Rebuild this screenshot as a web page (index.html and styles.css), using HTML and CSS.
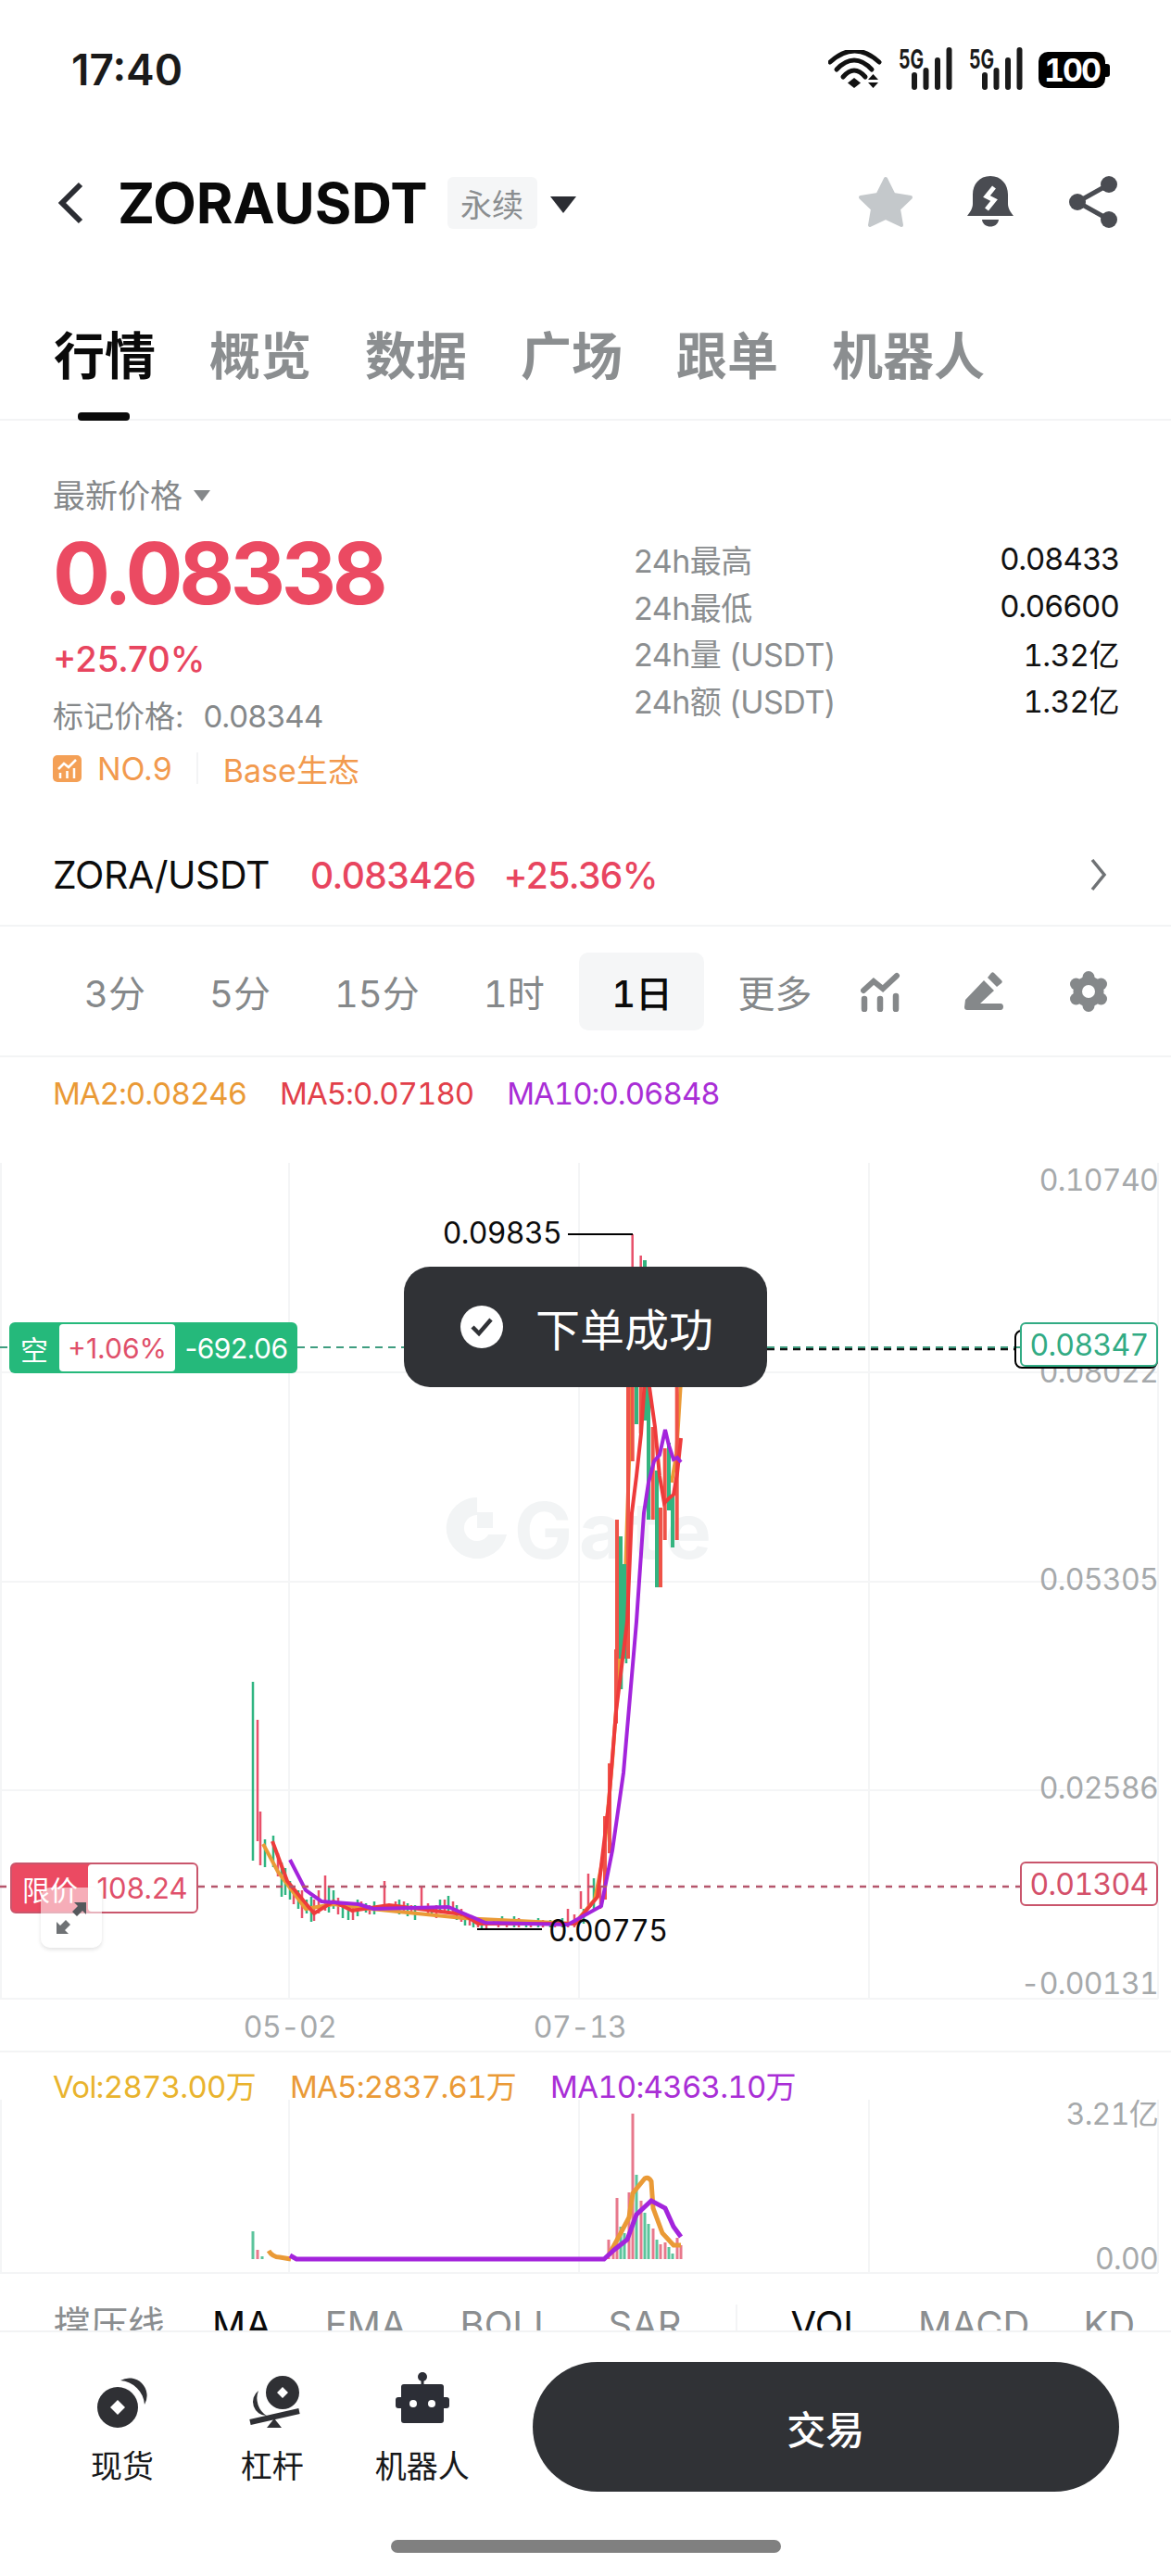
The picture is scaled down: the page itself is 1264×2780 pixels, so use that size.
FILE: index.html
```html
<!DOCTYPE HTML>
<html lang="zh">
<head>
<meta charset="utf-8">
<title>ZORAUSDT</title>
<link rel="stylesheet" href="styles.css">
</head>
<body>
<div class="page">

  <div class="status">
    <span class="time">17:40</span>
    <div class="status-icons">
      <svg class="wifi" width="58" height="42" viewBox="0 0 58 42">
        <g fill="none" stroke="#111" stroke-width="5" stroke-linecap="round">
          <path d="M2 13Q28.500 -11 55 13"/>
          <path d="M9 21Q28 1 47 21"/>
          <path d="M16 29Q28 15 40 29"/>
        </g>
        <path d="M28 30L35 35.500L28 41L21 35.500Z" fill="#111"/>
        <path d="M43 32L48.500 26L54 32ZM43 35L54 35L48.500 41Z" fill="#111"/>
      </svg>
      <svg class="signal" width="58" height="44" viewBox="0 0 58 44">
        <text class="signal-text" x="0" y="21" textLength="27" lengthAdjust="spacingAndGlyphs">5G</text>
        <path d="M17 28V41M29.500 23V41M42 12V41M54.500 1V41" stroke="#1a1a1a" stroke-width="6" stroke-linecap="round"/>
      </svg>
      <svg class="signal" width="58" height="44" viewBox="0 0 58 44">
        <text class="signal-text" x="0" y="21" textLength="27" lengthAdjust="spacingAndGlyphs">5G</text>
        <path d="M17 28V41M29.500 23V41M42 12V41M54.500 1V41" stroke="#1a1a1a" stroke-width="6" stroke-linecap="round"/>
      </svg>
      <div class="battery"><span class="battery-level">100</span></div>
    </div>
  </div>

  <div class="header">
    <svg class="back" width="30" height="46" viewBox="0 0 30 46"><path d="M26 3L6 23L26 43" fill="none" stroke="#2b2d33" stroke-width="6"/></svg>
    <span class="symbol">ZORAUSDT</span>
    <span class="badge">永续</span>
    <span class="caret"></span>
    <div class="header-icons">
      <svg class="star" width="60" height="56" viewBox="0 0 60 56"><path d="M30 3L38.500 20L57 23L44 35.500L47 53L30 45L13 53L16 35.500L3 23L21.500 20Z" fill="#c4c8cb" stroke="#c4c8cb" stroke-width="4" stroke-linejoin="round"/></svg>
      <svg width="50" height="56" viewBox="0 0 50 56">
        <path d="M25 0C13 0 6 9 6 20V30C6 35 3 39 0 43H50C47 39 44 35 44 30V20C44 9 37 0 25 0Z" fill="#4a4c52"/>
        <path d="M16 47H34C33 57 17 57 16 47Z" fill="#4a4c52"/>
        <path d="M29 12L21 22L29 26L21 36" fill="none" stroke="#fff" stroke-width="5"/>
      </svg>
      <svg width="52" height="56" viewBox="0 0 52 56">
        <g fill="#4a4c52"><circle cx="43" cy="9" r="9"/><circle cx="9" cy="28" r="9"/><circle cx="43" cy="47" r="9"/></g>
        <path d="M43 9L9 28L43 47" fill="none" stroke="#4a4c52" stroke-width="5"/>
      </svg>
    </div>
  </div>

  <div class="tabs">
    <div class="tab tab-active">行情</div>
    <div class="tab">概览</div>
    <div class="tab">数据</div>
    <div class="tab">广场</div>
    <div class="tab">跟单</div>
    <div class="tab">机器人</div>
  </div>

  <div class="quote">
    <div class="quote-left">
      <div class="last-label">最新价格<span class="caret-small"></span></div>
      <div class="last-price">0.08338</div>
      <div class="last-change">+25.70%</div>
      <div class="mark-price">标记价格:<span class="mark-value">0.08344</span></div>
      <div class="tags">
        <svg width="31" height="29" viewBox="0 0 31 29">
          <rect width="31" height="29" rx="5" fill="#f4a056"/>
          <path d="M8 25V19M15.500 25V17M23 25V14M6 15L12 9L17 13L25 5" fill="none" stroke="#fff" stroke-width="2.500"/>
        </svg>
        <span class="rank">NO.9</span>
        <span class="tag-line"></span>
        <span class="rank">Base生态</span>
      </div>
    </div>
    <div class="quote-right">
      <div class="stat"><span class="stat-label">24h最高</span><span>0.08433</span></div>
      <div class="stat"><span class="stat-label">24h最低</span><span>0.06600</span></div>
      <div class="stat"><span class="stat-label">24h量 (USDT)</span><span class="stat-num">1.32亿</span></div>
      <div class="stat"><span class="stat-label">24h额 (USDT)</span><span class="stat-num">1.32亿</span></div>
    </div>
  </div>

  <div class="pair">
    <span class="pair-name">ZORA/USDT</span>
    <span class="pair-price">0.083426</span>
    <span class="pair-price">+25.36%</span>
    <svg class="pair-arrow" width="20" height="36" viewBox="0 0 20 36"><path d="M3 2L16 18L3 34" fill="none" stroke="#6f7275" stroke-width="3.500"/></svg>
  </div>

  <div class="intervals">
    <span class="interval">3分</span>
    <span class="interval">5分</span>
    <span class="interval">15分</span>
    <span class="interval">1时</span>
    <span class="interval interval-active">1日</span>
    <span class="interval">更多</span>
    <div class="tools">
      <svg width="44" height="44" viewBox="0 0 44 44">
        <path d="M3 21L14 11L24 19L39 5" fill="none" stroke="#85888a" stroke-width="6" stroke-linecap="round"/>
        <path d="M4 30V41M21 30V41M38 27V41" stroke="#85888a" stroke-width="6.500" stroke-linecap="round"/>
      </svg>
      <svg width="44" height="44" viewBox="0 0 44 44">
        <path d="M1 31L21 10L32 21L17 35H39C43 35 43 42 39 42H3C1 42 0 41 0 39Z" fill="#85888a"/>
        <path d="M25 7L29 2C30 1 31 1 32 2L40 10C41 11 41 12 40 13L35 17Z" fill="#85888a"/>
      </svg>
      <svg width="44" height="44" viewBox="0 0 44 44">
        <g fill="#85888a">
          <circle cx="22" cy="22" r="16.500"/>
          <circle cx="22" cy="6.500" r="6.500"/>
          <circle cx="35.500" cy="14" r="6.500"/>
          <circle cx="35.500" cy="30" r="6.500"/>
          <circle cx="22" cy="37.500" r="6.500"/>
          <circle cx="8.500" cy="30" r="6.500"/>
          <circle cx="8.500" cy="14" r="6.500"/>
        </g>
        <circle cx="22" cy="22" r="7" fill="#fff"/>
      </svg>
    </div>
  </div>

  <div class="legend legend-ma">
    <span class="c-orange">MA2:0.08246</span>
    <span class="c-red">MA5:0.07180</span>
    <span class="c-purple">MA10:0.06848</span>
  </div>

  <div class="chart">
    <svg class="chart-svg" width="1264" height="996" viewBox="0 1219 1264 996">
      <path d="M0 1481H1250M0 1707H1250M0 1932H1250M0 2157H1250M1 1255V2157M312 1255V2157M625 1255V2157M938 1255V2157M1250 1255V2157" stroke="#f4f5f6" stroke-width="2" fill="none"/>
      <text class="watermark" x="555" y="1682">Gate</text>
      <path d="M515 1616A33 33 0 1 0 547 1656H515Z" fill="#f2f4f5"/>
      <circle cx="515" cy="1649" r="14" fill="#fff"/>
      <rect x="515" y="1632" width="17" height="17" fill="#f2f4f5"/>

      <!-- candles -->
      <path class="wick-green" d="M273 1815V2008M286 1985V2015M295 1981V2015M304 2010V2047M308 2016V2045M313 2030V2050M322 2040V2060M331 2050V2065M336 2047V2074M355 2035V2064M360 2040V2060M370 2052V2070M376 2060V2072M386 2050V2068M395 2054V2064M404 2052V2066M422 2056V2064M431 2050V2066M440 2054V2068M448 2056V2072M466 2058V2066M475 2050V2062M484 2046V2062M493 2056V2072M502 2064V2078M511 2068V2080M520 2072V2082M533 2070V2078M542 2068V2078M555 2068V2080M568 2072V2080M581 2070V2080M594 2072V2080M607 2070V2080M630 2060V2076M641 2027V2060M671 1780V1823M676 1780V1795"/>
      <path class="wick-red" d="M278 1856V1987M281 1955V2013M300 2000V2025M317 2035V2055M326 2040V2070M339 2050V2073M344 2040V2065M351 2024V2062M365 2048V2066M381 2056V2072M390 2052V2062M399 2056V2066M415 2030V2062M427 2052V2064M436 2052V2064M444 2056V2066M455 2037V2060M462 2054V2068M471 2056V2070M480 2050V2064M489 2052V2066M498 2060V2074M507 2066V2078M516 2070V2080M525 2072V2082M538 2072V2080M547 2072V2080M560 2070V2080M573 2072V2080M586 2072V2080M599 2072V2080M613 2060V2080M620 2066V2080M627 2041V2060M635 2022V2060M648 2035V2060M682.700 1332V1500M691.700 1355V1500"/>
      <path class="ma-line ma-orange" d="M284 1990L300 2020L330 2060L360 2055L400 2060L500 2070L620 2076L642 2050L652 2000L661 1900L669 1790L675 1700L682 1490M725 1600L730 1570L735 1490"/>
      <path class="body-red" d="M653 1960V2050M658 1903V2000M665 1780V1860M666 1640V1790M678 1490V1790M682.700 1490V1577M691.700 1490V1547M704.700 1540V1640M713 1627V1713M717.700 1563V1662M730.700 1490V1662"/>
      <path class="body-green" d="M670 1658V1790M674 1688V1790M687 1490V1537M696 1360V1533M700 1490V1640M709 1587V1713M722 1557V1630M726 1613V1670"/>
      <path class="ma-line ma-red" d="M294 1987L310 2030L339 2065L360 2052L380 2062L420 2056L500 2066L516 2076L621 2076L645 2047L657 1947L665 1847L677 1750L682 1633L687 1593L692 1547L696 1490M700 1490L707 1540L712 1593L717 1622L722 1617L727 1613L731 1590L735 1552"/>
      <path class="ma-line ma-purple" d="M313 2007L330 2040L347 2052L387 2055L403 2060L484 2058L524 2075L613 2077L649 2057L661 1997L673 1913L687 1750L695 1633L700 1600L706 1577L712 1570L718 1543L722 1560L727 1575L731 1573L735 1578"/>

      <!-- high and low markers -->
      <path d="M613 1332H683" stroke="#000" stroke-width="2"/>
      <path d="M515 2082H585" stroke="#000" stroke-width="2"/>
      <text class="mark-text" x="606" y="1342" text-anchor="end">0.09835</text>
      <text class="mark-text" x="592" y="2095">0.00775</text>

      <!-- order lines -->
      <path class="dash-green" d="M0 1454H10M321 1454H436"/>
      <path class="dash-black" d="M828 1456H1095"/>
      <path class="dash-green dash-over" d="M828 1454H1101"/>
      <path class="dash-rose" d="M0 2036H11M214 2036H1102"/>

      <!-- price axis -->
      <text class="axis-text" x="1250" y="1285" text-anchor="end">0.10740</text>
      <text class="axis-text" x="1250" y="1492" text-anchor="end">0.08022</text>
      <text class="axis-text" x="1250" y="1716" text-anchor="end">0.05305</text>
      <text class="axis-text" x="1250" y="1941" text-anchor="end">0.02586</text>
      <text class="axis-text" x="1250" y="2152" text-anchor="end">-0.00131</text>
      <text class="axis-text" x="313" y="2199" text-anchor="middle">05-02</text>
      <text class="axis-text" x="626" y="2199" text-anchor="middle">07-13</text>
    </svg>

    <div class="pos-tag pos-short">
      <span class="pos-side">空</span>
      <span class="pos-box">+1.06%</span>
      <span class="pos-pnl">-692.06</span>
    </div>
    <div class="pos-tag pos-limit">
      <span class="pos-side">限价</span>
      <span class="pos-box">108.24</span>
    </div>
    <div class="price-shadow"></div>
    <div class="price-tag price-last">0.08347</div>
    <div class="price-tag price-limit">0.01304</div>
    <div class="expand">
      <svg width="40" height="40" viewBox="0 0 40 40">
        <path d="M23 3H36V16L32 12L26 18L21 13L27 7Z" fill="#55585c"/>
        <path d="M17 37H4V24L8 28L14 22L19 27L13 33Z" fill="#6f7275"/>
      </svg>
    </div>
    <div class="toast">
      <svg width="46" height="46" viewBox="0 0 46 46">
        <circle cx="23" cy="23" r="23" fill="#fff"/>
        <path d="M13 23L20 30L33 15" fill="none" stroke="#303236" stroke-width="4.500"/>
      </svg>
      <span class="toast-text">下单成功</span>
    </div>
  </div>

  <div class="legend legend-vol">
    <span class="c-yellow">Vol:2873.00万</span>
    <span class="c-orange">MA5:2837.61万</span>
    <span class="c-purple">MA10:4363.10万</span>
  </div>

  <div class="vol-chart">
    <svg class="chart-svg" width="1264" height="185" viewBox="0 2270 1264 185">
      <path d="M0 2453H1250M1 2266V2453M312 2266V2453M625 2266V2453M938 2266V2453M1250 2266V2453" stroke="#f4f5f6" stroke-width="2" fill="none"/>
      <path class="bar-green" d="M273 2408V2438M283 2435V2438M670 2403V2438M674 2410V2438M687 2347V2438M696 2388V2438M700 2400V2438M709 2417V2438M722 2425V2438M726 2432V2438"/>
      <path class="bar-red" d="M278 2428V2438M657 2417V2438M662 2430V2438M666 2372V2438M679 2366V2438M683 2281V2438M692 2375V2438M705 2405V2438M713 2422V2438M718 2420V2438M731 2415V2438M735 2423V2438"/>
      <path class="vol-line ma-orange" d="M290 2429C293 2434 296 2436 302 2436L314 2438M657 2434L670 2410L679 2393L683 2367L696 2351Q700 2349 703 2354L705 2383L715 2410L727 2423L735 2423"/>
      <path class="vol-line ma-purple" d="M313 2434L320 2438H652L663 2428L677 2417L687 2390L703 2375L718 2383L727 2403L735 2414"/>
      <text class="axis-text" x="1250" y="2293" text-anchor="end">3.21亿</text>
      <text class="axis-text" x="1250" y="2449" text-anchor="end">0.00</text>
    </svg>
  </div>

  <div class="indicators">
    <span class="ind ind-first">撑压线</span>
    <span class="ind ind-on">MA</span>
    <span class="ind">EMA</span>
    <span class="ind">BOLL</span>
    <span class="ind">SAR</span>
    <span class="ind-line"></span>
    <span class="ind ind-on">VOL</span>
    <span class="ind">MACD</span>
    <span class="ind">KD</span>
  </div>

  <div class="bottom">
    <div class="actions">
      <div class="action">
        <svg width="60" height="60" viewBox="0 0 60 60">
          <path d="M25 16A22 22 0 1 0 25 60A22 22 0 1 0 25 16ZM25 30L33 38L25 46L17 38Z" fill="#2f3034" fill-rule="evenodd"/>
          <path d="M28 9A19 19 0 0 1 54 35A28 28 0 0 0 28 9Z" fill="#2f3034"/>
        </svg>
        <span class="action-label">现货</span>
      </div>
      <div class="action">
        <svg width="60" height="60" viewBox="0 0 60 60">
          <path d="M41 4A18 18 0 1 0 41 40A18 18 0 1 0 41 4ZM41 16L47 22L41 28L35 22Z" fill="#2f3034" fill-rule="evenodd"/>
          <path d="M15 20A15 15 0 0 0 24 47A22 22 0 0 1 15 20Z" fill="#2f3034"/>
          <path d="M6 54L59 42" stroke="#2f3034" stroke-width="6"/>
          <path d="M32 50L40 60H24Z" fill="#2f3034"/>
        </svg>
        <span class="action-label">杠杆</span>
      </div>
      <div class="action">
        <svg width="60" height="60" viewBox="0 0 60 60">
          <circle cx="30" cy="5" r="5" fill="#2c2e36"/>
          <path d="M30 5V14" stroke="#2c2e36" stroke-width="3"/>
          <rect x="7" y="13" width="46" height="42" rx="3" fill="#2c2e36"/>
          <rect x="1" y="27" width="58" height="12" rx="3" fill="#2c2e36"/>
          <circle cx="20" cy="34" r="4" fill="#fff"/>
          <circle cx="40" cy="34" r="4" fill="#fff"/>
        </svg>
        <span class="action-label">机器人</span>
      </div>
      <div class="trade-btn">交易</div>
    </div>
    <div class="home-bar"></div>
  </div>

</div>
</body>
</html>
```

FILE: styles.css
```css
* {
  box-sizing: border-box;
}

body {
  margin: 0;
  background: #fff;
  font-family: "Inter", "Noto Sans CJK SC", sans-serif;
  color: #0c0c0c;
}

.page {
  width: 1264px;
  height: 2780px;
  overflow: hidden;
}

/* status bar */
.status {
  height: 150px;
  padding: 0 71px 0 77px;
  display: flex;
  align-items: center;
  justify-content: space-between;
}

.time {
  font-size: 46px;
  font-weight: 600;
  color: #1a1a1a;
}

.status-icons {
  display: flex;
  align-items: center;
  gap: 18px;
}

.signal {
  overflow: visible;
}

.signal-text {
  font-size: 28px;
  font-weight: 700;
  fill: #1a1a1a;
}

.battery {
  width: 72px;
  height: 39px;
  background: #000;
  border-radius: 10px;
  display: flex;
  align-items: center;
  justify-content: center;
  color: #fff;
  position: relative;
  margin-left: -1px;
}

.battery:after {
  content: "";
  position: absolute;
  right: -5px;
  top: 13px;
  width: 5px;
  height: 14px;
  background: #000;
  border-radius: 0 3px 3px 0;
}

.battery-level {
  font-size: 34px;
  font-weight: 700;
  font-variant-numeric: tabular-nums;
  letter-spacing: -2px;
}

/* header */
.header {
  height: 136px;
  padding: 2px 58px 0 61px;
  display: flex;
  align-items: center;
}

.symbol {
  margin-left: 36px;
  font-size: 60.500px;
  font-weight: 700;
  color: #0a0a0a;
}

.badge {
  margin-left: 21px;
  width: 97px;
  height: 56px;
  background: #f5f6f7;
  border-radius: 6px;
  color: #8b8e90;
  font-size: 34px;
  display: flex;
  align-items: center;
  justify-content: center;
}

.caret {
  margin: 3px 0 0 14px;
  width: 0;
  height: 0;
  border-left: 14px solid transparent;
  border-right: 14px solid transparent;
  border-top: 18px solid #2b2d33;
}

.header-icons {
  margin-left: auto;
  margin-top: -2px;
  display: flex;
  align-items: center;
  gap: 60px;
}

.star {
  margin-right: -2px;
}

/* tabs */
.tabs {
  height: 168px;
  padding: 61px 0 0 58px;
  display: flex;
  gap: 58px;
  border-bottom: 2px solid #f3f4f5;
}

.tab {
  height: 74px;
  font-size: 55px;
  line-height: 74px;
  font-weight: 700;
  color: #8b8e90;
  position: relative;
}

.tab-active {
  color: #0a0a0a;
}

.tab-active:after {
  content: "";
  position: absolute;
  left: 26px;
  top: 98px;
  width: 56px;
  height: 9px;
  border-radius: 4px;
  background: #0a0a0a;
}

/* quote */
.quote {
  height: 436px;
  padding: 0 56px 0 57px;
  display: flex;
  justify-content: space-between;
}

.quote-left {
  padding-top: 59px;
}

.last-label {
  font-size: 35px;
  line-height: 44px;
  color: #85888a;
  display: flex;
  align-items: center;
}

.caret-small {
  margin-left: 12px;
  width: 0;
  height: 0;
  border-left: 9px solid transparent;
  border-right: 9px solid transparent;
  border-top: 12px solid #85888a;
}

.last-price {
  margin-top: 12px;
  font-size: 92px;
  line-height: 100px;
  font-weight: 700;
  letter-spacing: -4.400px;
  color: #eb4a62;
}

.last-change {
  margin-top: 20px;
  font-size: 38px;
  line-height: 44px;
  font-weight: 500;
  color: #e8455f;
}

.mark-price {
  margin-top: 18px;
  font-size: 33px;
  line-height: 44px;
  color: #85888a;
}

.mark-value {
  margin-left: 21px;
  letter-spacing: -0.500px;
}

.tags {
  margin-top: 12px;
  height: 44px;
  display: flex;
  align-items: center;
  color: #f29a4e;
  font-size: 34px;
}

.rank {
  margin-left: 17px;
}

.tag-line {
  margin-left: 26px;
  margin-right: 10px;
  width: 2px;
  height: 34px;
  background: #f3f4f5;
}

.quote-right {
  width: 524px;
  padding-top: 124px;
}

.stat {
  height: 50.700px;
  display: flex;
  align-items: center;
  justify-content: space-between;
  font-size: 33px;
  letter-spacing: -0.500px;
  color: #111;
}

.stat-num {
  font-variant-numeric: tabular-nums;
}

.stat-label {
  font-size: 34px;
  letter-spacing: -0.500px;
  color: #8b8e90;
}

/* pair row */
.pair {
  height: 110px;
  padding: 0 68px 0 57px;
  display: flex;
  align-items: center;
  gap: 30px;
  font-size: 39px;
  border-bottom: 2px solid #f3f4f5;
}

.pair-name {
  margin-right: 14px;
  font-size: 41px;
  letter-spacing: -0.400px;
}

.pair-price {
  color: #e8455f;
  font-weight: 500;
  letter-spacing: -0.600px;
}

.pair-arrow {
  margin-left: auto;
}

/* intervals */
.intervals {
  height: 141px;
  padding-left: 56.500px;
  display: flex;
  align-items: center;
  border-bottom: 2px solid #f3f4f5;
}

.interval {
  height: 84px;
  padding: 0 34.500px;
  display: flex;
  align-items: center;
  font-size: 40px;
  font-variant-numeric: tabular-nums;
  color: #85888a;
}

.interval-active {
  margin: 0 2.500px;
  padding: 0 33.500px 0 35.500px;
  background: #f5f6f7;
  border-radius: 10px;
  color: #0a0a0a;
  font-weight: 500;
}

.tools {
  margin-left: 18px;
  display: flex;
  gap: 68px;
}

/* legends */
.legend {
  display: flex;
  align-items: center;
  padding-left: 57px;
  font-size: 33px;
  font-variant-numeric: tabular-nums;
}

.legend-ma {
  height: 78px;
  gap: 36px;
  letter-spacing: -1px;
}

.legend-vol {
  height: 55px;
  padding-top: 14px;
  gap: 37px;
  letter-spacing: -0.750px;
}

.c-orange {
  color: #ea9a36;
}

.c-red {
  color: #e2404a;
}

.c-purple {
  color: #a92ed6;
}

.c-yellow {
  color: #e9b32d;
}

/* chart */
.chart {
  height: 996px;
  position: relative;
  border-bottom: 2px solid #f3f4f5;
}

.chart-svg {
  position: absolute;
  left: 0;
  top: 0;
  overflow: visible;
}

.watermark {
  font-size: 84px;
  font-weight: 700;
  letter-spacing: 7px;
  fill: #f2f4f5;
}

.wick-green {
  stroke: #2fb581;
  stroke-width: 2.500px;
  fill: none;
}

.wick-red {
  stroke: #e8506a;
  stroke-width: 2.500px;
  fill: none;
}

.body-red {
  stroke: #ef5348;
  stroke-width: 4px;
  fill: none;
}

.body-green {
  stroke: #33b47f;
  stroke-width: 4px;
  fill: none;
}

.ma-line {
  stroke-width: 4px;
  fill: none;
}

.ma-orange {
  stroke: #ea9a36;
}

.ma-red {
  stroke: #ee3b3b;
}

.ma-purple {
  stroke: #a324dc;
}

.mark-text {
  font-size: 32px;
  font-variant-numeric: tabular-nums;
  letter-spacing: -0.700px;
  fill: #0a0a0a;
}

.axis-text {
  font-size: 32px;
  font-variant-numeric: tabular-nums;
  letter-spacing: -0.700px;
  fill: #a6a9ab;
}

.dash-green {
  stroke: #3f9d80;
  stroke-width: 2px;
  stroke-dasharray: 8 6;
  fill: none;
}

.dash-black {
  stroke: #111;
  stroke-width: 2.500px;
  stroke-dasharray: 8 6;
  fill: none;
}

.dash-rose {
  stroke: #b5566c;
  stroke-width: 2.500px;
  stroke-dasharray: 7 7;
  fill: none;
}

.pos-tag {
  position: absolute;
  display: flex;
  align-items: stretch;
  height: 55px;
  border-radius: 6px;
  font-size: 30px;
  color: #fff;
}

.pos-short {
  left: 10px;
  top: 208px;
  width: 311px;
  background: #25b97b;
  padding: 2px 0;
}

.pos-limit {
  left: 11px;
  top: 791px;
  width: 203px;
  background: #eb4a62;
  border: 2px solid #c9566c;
}

.pos-side {
  display: flex;
  align-items: center;
  justify-content: center;
}

.pos-short .pos-side {
  width: 54px;
}

.pos-limit .pos-side {
  width: 82px;
}

.pos-box {
  background: #fff;
  color: #e0506a;
  border-radius: 4px;
  display: flex;
  align-items: center;
  justify-content: center;
}

.pos-short .pos-box {
  width: 125px;
}

.pos-limit .pos-box {
  flex: 1;
  font-size: 31px;
}

.pos-pnl {
  flex: 1;
  display: flex;
  align-items: center;
  justify-content: center;
  letter-spacing: -0.500px;
}

.price-tag {
  position: absolute;
  width: 149px;
  height: 48px;
  background: #fff;
  border-radius: 6px;
  font-size: 32px;
  font-variant-numeric: tabular-nums;
  letter-spacing: -0.700px;
  display: flex;
  align-items: center;
  justify-content: center;
}

.price-last {
  left: 1101px;
  top: 208px;
  border: 2px solid #32ab84;
  color: #32ab84;
}

.price-limit {
  left: 1101px;
  top: 790px;
  border: 2px solid #c9566c;
  color: #d4506a;
}

.price-shadow {
  position: absolute;
  left: 1095px;
  top: 216px;
  width: 155px;
  height: 42px;
  border: 2px solid #000;
  border-radius: 8px;
}

.expand {
  position: absolute;
  left: 44px;
  top: 818px;
  width: 66px;
  height: 65px;
  background: rgba(255, 255, 255, 0.55);
  border-radius: 10px;
  box-shadow: 0 2px 4px rgba(0, 0, 0, 0.12);
  display: flex;
  align-items: center;
  justify-content: center;
}

.toast {
  position: absolute;
  left: 436px;
  top: 148px;
  width: 392px;
  height: 130px;
  padding-left: 61px;
  background: #303236;
  border-radius: 28px;
  display: flex;
  align-items: center;
  gap: 35px;
}

.toast-text {
  font-size: 48px;
  color: #fff;
}

/* volume */
.vol-chart {
  height: 185px;
  position: relative;
}

.bar-green {
  stroke: #5cc49c;
  stroke-width: 3px;
  fill: none;
}

.bar-red {
  stroke: #e8788c;
  stroke-width: 3px;
  fill: none;
}

.vol-line {
  stroke-width: 5px;
  fill: none;
}

/* indicator tabs, cut off by the bottom bar */
.indicators {
  height: 60px;
  padding: 32px 0 0 58px;
  overflow: hidden;
  display: flex;
  gap: 58px;
  font-size: 40px;
  line-height: 44px;
  color: #8b8e90;
}

.ind-first {
  margin-right: -7px;
}

.ind-on {
  color: #0a0a0a;
}

.ind-line {
  width: 2px;
  height: 44px;
  background: #f3f4f5;
}

/* bottom bar */
.bottom {
  height: 265px;
  border-top: 2px solid #f2f3f4;
  padding: 32px 56px 0 51px;
}

.actions {
  display: flex;
  align-items: flex-start;
}

.action {
  width: 162px;
  padding-top: 11px;
  display: flex;
  flex-direction: column;
  align-items: center;
}

.action-label {
  margin-top: 20px;
  font-size: 34px;
  line-height: 44px;
  color: #17181a;
}

.trade-btn {
  margin-left: 38px;
  width: 634px;
  height: 140px;
  background: #303236;
  border-radius: 70px;
  color: #fff;
  font-size: 42px;
  font-weight: 500;
  display: flex;
  align-items: center;
  justify-content: center;
}

.home-bar {
  margin: 52px 0 0 371px;
  width: 421px;
  height: 14px;
  background: #808080;
  border-radius: 7px;
}
```
